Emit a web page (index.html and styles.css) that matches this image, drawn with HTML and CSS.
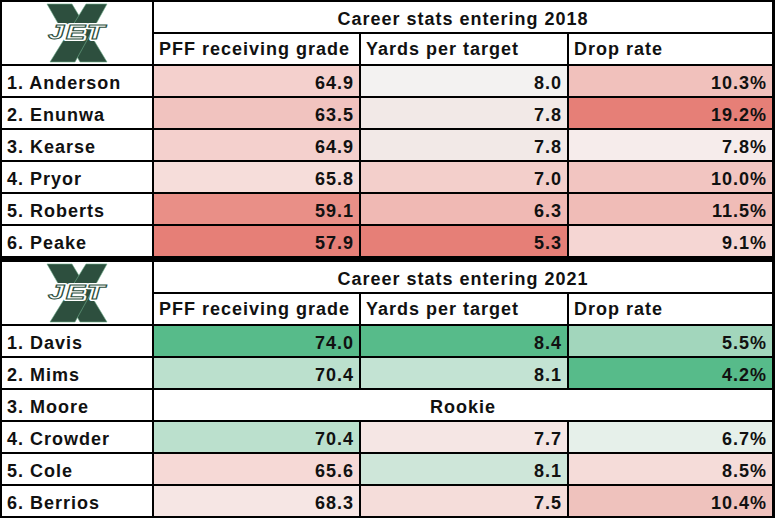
FILE: index.html
```html
<!DOCTYPE html>
<html>
<head>
<meta charset="utf-8">
<link rel="stylesheet" href="styles.css">
</head>
<body>
<div class="sheet">
  <section class="block">
    <div class="logo">
      <svg width="150" height="62" viewBox="0 0 150 62">
        <polygon points="45,2 70,2 105,60 78,60" class="x"/>
        <polygon points="84,2 105,2 73,60 48,60" class="x"/>
        <text x="46" y="37" textLength="58" lengthAdjust="spacingAndGlyphs" class="jet-halo">JET</text>
        <text x="46" y="37" textLength="58" lengthAdjust="spacingAndGlyphs" class="jet">JET</text>
      </svg>
    </div>
    <div class="title">Career stats entering 2018</div>
    <div class="colhead">PFF receiving grade</div>
    <div class="colhead">Yards per target</div>
    <div class="colhead">Drop rate</div>

    <div>1. Anderson</div>
    <div class="num" style="background:#F4D0CD">64.9</div>
    <div class="num" style="background:#F3F2F1">8.0</div>
    <div class="num" style="background:#F1C1BC">10.3%</div>

    <div>2. Enunwa</div>
    <div class="num" style="background:#F1C3BF">63.5</div>
    <div class="num" style="background:#F2E9E7">7.8</div>
    <div class="num" style="background:#E67F77">19.2%</div>

    <div>3. Kearse</div>
    <div class="num" style="background:#F4D0CD">64.9</div>
    <div class="num" style="background:#F2E9E7">7.8</div>
    <div class="num" style="background:#F6ECEB">7.8%</div>

    <div>4. Pryor</div>
    <div class="num" style="background:#F6DDDA">65.8</div>
    <div class="num" style="background:#F3CFCB">7.0</div>
    <div class="num" style="background:#F2C5C1">10.0%</div>

    <div>5. Roberts</div>
    <div class="num" style="background:#E98F87">59.1</div>
    <div class="num" style="background:#F0B9B4">6.3</div>
    <div class="num" style="background:#F0BCB7">11.5%</div>

    <div>6. Peake</div>
    <div class="num" style="background:#E67F77">57.9</div>
    <div class="num" style="background:#E67F77">5.3</div>
    <div class="num" style="background:#F5D6D3">9.1%</div>
  </section>

  <section class="block">
    <div class="logo">
      <svg width="150" height="62" viewBox="0 0 150 62">
        <polygon points="45,2 70,2 105,60 78,60" class="x"/>
        <polygon points="84,2 105,2 73,60 48,60" class="x"/>
        <text x="46" y="37" textLength="58" lengthAdjust="spacingAndGlyphs" class="jet-halo">JET</text>
        <text x="46" y="37" textLength="58" lengthAdjust="spacingAndGlyphs" class="jet">JET</text>
      </svg>
    </div>
    <div class="title">Career stats entering 2021</div>
    <div class="colhead">PFF receiving grade</div>
    <div class="colhead">Yards per target</div>
    <div class="colhead">Drop rate</div>

    <div>1. Davis</div>
    <div class="num" style="background:#57BB8A">74.0</div>
    <div class="num" style="background:#57BB8A">8.4</div>
    <div class="num" style="background:#A2D6BC">5.5%</div>

    <div>2. Mims</div>
    <div class="num" style="background:#BBE0CD">70.4</div>
    <div class="num" style="background:#C3E3D3">8.1</div>
    <div class="num" style="background:#57BB8A">4.2%</div>

    <div>3. Moore</div>
    <div class="rookie">Rookie</div>

    <div>4. Crowder</div>
    <div class="num" style="background:#BBE0CD">70.4</div>
    <div class="num" style="background:#F5E6E4">7.7</div>
    <div class="num" style="background:#E6F0EA">6.7%</div>

    <div>5. Cole</div>
    <div class="num" style="background:#F6D9D6">65.6</div>
    <div class="num" style="background:#CEE6D9">8.1</div>
    <div class="num" style="background:#F5DCD9">8.5%</div>

    <div>6. Berrios</div>
    <div class="num" style="background:#F6E6E4">68.3</div>
    <div class="num" style="background:#F5DDDA">7.5</div>
    <div class="num" style="background:#EFC2BD">10.4%</div>
  </section>
</div>
</body>
</html>
```

FILE: styles.css
```css
html, body {
  margin: 0;
  padding: 0;
  background: #ffffff;
}

.sheet {
  width: 775px;
  height: 518px;
  box-sizing: border-box;
  background: #000000;
  padding: 2px 3px 2px 2px;
  display: flex;
  flex-direction: column;
  gap: 6px;
}

.block {
  display: grid;
  grid-template-columns: 150px 205px 206px 203px;
  grid-auto-rows: 30px;
  gap: 2px;
}

.block > div {
  box-sizing: border-box;
  background: #ffffff;
  display: flex;
  align-items: center;
  padding: 4px 5px 0 5px;
  font-family: "Liberation Sans", Arial, sans-serif;
  font-weight: bold;
  font-size: 18px;
  letter-spacing: 1px;
  color: #111111;
  white-space: nowrap;
  overflow: hidden;
}

.block > .colhead {
  padding-top: 1px;
}

.block > .logo {
  grid-row: span 2;
  padding: 0;
  align-items: stretch;
}

.logo svg {
  display: block;
}

.logo .x {
  fill: #2D4F3E;
  stroke: #6FAF8C;
  stroke-width: 0.6;
}

.logo .jet-halo {
  font-family: "Liberation Sans", Arial, sans-serif;
  font-weight: bold;
  font-style: italic;
  font-size: 20px;
  fill: #ffffff;
  stroke: #ffffff;
  stroke-width: 4;
  stroke-linejoin: round;
}

.logo .jet {
  font-family: "Liberation Sans", Arial, sans-serif;
  font-weight: bold;
  font-style: italic;
  font-size: 20px;
  fill: #ffffff;
  stroke: #2D4F3E;
  stroke-width: 1;
}

.block > .title {
  grid-column: span 3;
  justify-content: center;
}

.block > .rookie {
  grid-column: span 3;
  justify-content: center;
}

.block > .num {
  justify-content: flex-end;
}
```
